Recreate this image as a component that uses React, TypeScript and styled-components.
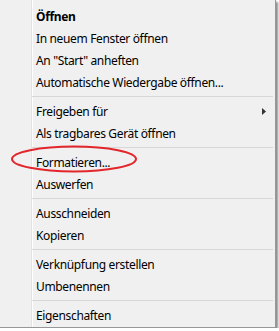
import { createGlobalStyle, styled } from "styled-components";

interface Entry {
  label?: string;
  bold?: boolean;
  submenu?: boolean;
  separator?: boolean;
}

const entries: Entry[] = [
  { label: "Öffnen", bold: true },
  { label: "In neuem Fenster öffnen" },
  { label: 'An "Start" anheften' },
  { label: "Automatische Wiedergabe öffnen..." },
  { separator: true },
  { label: "Freigeben für", submenu: true },
  { label: "Als tragbares Gerät öffnen" },
  { separator: true },
  { label: "Formatieren..." },
  { label: "Auswerfen" },
  { separator: true },
  { label: "Ausschneiden" },
  { label: "Kopieren" },
  { separator: true },
  { label: "Verknüpfung erstellen" },
  { label: "Umbenennen" },
  { separator: true },
  { label: "Eigenschaften" },
];

const GlobalStyle = createGlobalStyle`
  body {
    margin: 0;
    background: #ffffff;
    font-family: "Noto Sans", "Open Sans", sans-serif;
  }
`;

const Menu = styled.div`
  position: relative;
  box-sizing: border-box;
  width: 276px;
  height: 328px;
  padding: 5px 0 1px;
  border-right: 1px solid #979797;
  border-bottom: 1px solid #979797;
  background: linear-gradient(
    to right,
    #f0f0f0 31px,
    #e2e3e3 31px,
    #e2e3e3 32px,
    #ffffff 32px,
    #ffffff 33px,
    #f0f0f0 33px
  );
  box-shadow: 2px 2px 2px rgba(0, 0, 0, 0.45);
`;

const Item = styled.div<{ $bold?: boolean }>`
  display: flex;
  align-items: center;
  justify-content: space-between;
  height: 22px;
  padding: 0 9px 0 36px;
  font-size: 12px;
  letter-spacing: -0.35px;
  font-weight: ${(p) => (p.$bold ? 700 : 400)};
  color: #000;
  white-space: nowrap;
`;

const Separator = styled.div`
  height: 1px;
  margin: 3px 2px 3px 32px;
  background: #d7d7d7;
`;

const Mark = styled.svg`
  position: absolute;
  left: 10px;
  top: 145px;
`;

function Arrow() {
  return (
    <svg width="4" height="7" viewBox="0 0 4 7">
      <path d="M0 0 L4 3.5 L0 7 Z" fill="#333" />
    </svg>
  );
}

export default function App() {
  return (
    <>
      <GlobalStyle />
      <Menu>
        {entries.map((e, i) =>
          e.separator ? (
            <Separator key={i} />
          ) : (
            <Item key={i} $bold={e.bold}>
              <span>{e.label}</span>
              {e.submenu && <Arrow />}
            </Item>
          )
        )}
        <Mark width="128" height="28" viewBox="0 0 128 28">
          <ellipse cx="64" cy="14" rx="62" ry="12.5" fill="none" stroke="#e3262b" strokeWidth="2" />
        </Mark>
      </Menu>
    </>
  );
}
